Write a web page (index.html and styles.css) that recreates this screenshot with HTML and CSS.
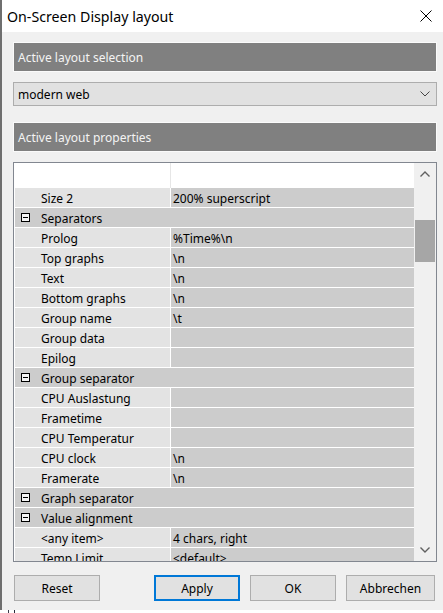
FILE: index.html
```html
<!DOCTYPE html>
<html>
<head>
<meta charset="utf-8">
<link rel="stylesheet" href="styles.css">
</head>
<body>
<div class="window">
  <div class="titlebar">
    <span class="title">On-Screen Display layout</span>
    <svg class="close" width="12" height="12" viewBox="0 0 12 12"><path d="M0.5 0.5L11.5 11.5M11.5 0.5L0.5 11.5" stroke="#000" stroke-width="1" fill="none"/></svg>
  </div>
  <div class="content">
    <div class="section-header">Active layout selection</div>
    <div class="combo">
      <span>modern web</span>
      <svg class="combo-arrow" width="10" height="6" viewBox="0 0 10 6"><path d="M0.5 0.5L5 5L9.5 0.5" stroke="#444" stroke-width="1" fill="none"/></svg>
    </div>
    <div class="section-header second">Active layout properties</div>
    <div class="grid">
      <div class="rows">
        <div class="row top"><div class="name"></div><div class="val"></div></div>
        <div class="row"><div class="name">Size 2</div><div class="val">200% superscript</div></div>
        <div class="row cat"><span class="box"></span>Separators</div>
        <div class="row"><div class="name">Prolog</div><div class="val">%Time%\n</div></div>
        <div class="row"><div class="name">Top graphs</div><div class="val">\n</div></div>
        <div class="row"><div class="name">Text</div><div class="val">\n</div></div>
        <div class="row"><div class="name">Bottom graphs</div><div class="val">\n</div></div>
        <div class="row"><div class="name">Group name</div><div class="val">\t</div></div>
        <div class="row"><div class="name">Group data</div><div class="val"></div></div>
        <div class="row"><div class="name">Epilog</div><div class="val"></div></div>
        <div class="row cat"><span class="box"></span>Group separator</div>
        <div class="row"><div class="name">CPU Auslastung</div><div class="val"></div></div>
        <div class="row"><div class="name">Frametime</div><div class="val"></div></div>
        <div class="row"><div class="name">CPU Temperatur</div><div class="val"></div></div>
        <div class="row"><div class="name">CPU clock</div><div class="val">\n</div></div>
        <div class="row"><div class="name">Framerate</div><div class="val">\n</div></div>
        <div class="row cat"><span class="box"></span>Graph separator</div>
        <div class="row cat"><span class="box"></span>Value alignment</div>
        <div class="row"><div class="name">&lt;any item&gt;</div><div class="val">4 chars, right</div></div>
        <div class="row"><div class="name">Temp Limit</div><div class="val">&lt;default&gt;</div></div>
      </div>
      <div class="scrollbar">
        <div class="sb-btn"><svg width="10" height="6" viewBox="0 0 10 6"><path d="M0.5 5.5L5 1L9.5 5.5" stroke="#606060" stroke-width="1.4" fill="none"/></svg></div>
        <div class="sb-track"><div class="sb-thumb"></div></div>
        <div class="sb-btn"><svg width="10" height="6" viewBox="0 0 10 6"><path d="M0.5 0.5L5 5L9.5 0.5" stroke="#606060" stroke-width="1.4" fill="none"/></svg></div>
      </div>
    </div>
    <div class="buttons">
      <button class="btn">Reset</button>
      <div class="spacer"></div>
      <button class="btn default">Apply</button>
      <button class="btn">OK</button>
      <button class="btn wide">Abbrechen</button>
    </div>
  </div>
</div>
<div class="behind"></div>
</body>
</html>
```

FILE: styles.css
```css
html, body {
  margin: 0;
  padding: 0;
}
body {
  width: 443px;
  height: 613px;
  overflow: hidden;
  background: #ffffff;
  font-family: "Noto Sans", "Segoe UI", sans-serif;
  font-size: 12px;
  color: #000;
}
.window {
  width: 441px;
  height: 610px;
  border-left: 2px solid #6f6f6f;
  background: #f0f0f0;
  display: flex;
  flex-direction: column;
}
.titlebar {
  height: 32px;
  background: #ffffff;
  display: flex;
  align-items: center;
  padding-left: 5px;
  padding-right: 11px;
  flex: none;
}
.title {
  font-size: 14.2px;
  flex: 1;
  line-height: 32px;
  padding-top: 2px;
}
.close {
  display: block;
  margin-top: -1px;
}
.content {
  padding: 10px 6px 0 11px;
  display: flex;
  flex-direction: column;
}
.section-header {
  height: 28px;
  background: #808080;
  border: 1px solid #fafafa;
  color: #f4f4f4;
  line-height: 30px;
  padding-left: 4px;
  font-size: 12px;
  overflow: hidden;
}
.section-header.second {
  margin-top: 16px;
}
.combo {
  margin-top: 10px;
  height: 22px;
  background: #e1e1e1;
  border: 1px solid #adadad;
  display: flex;
  align-items: center;
  padding-left: 4px;
  padding-right: 6px;
}
.combo span {
  flex: 1;
  line-height: 22px;
  padding-top: 1px;
}
.combo-arrow {
  display: block;
}
.grid {
  margin-top: 10px;
  height: 398px;
  border: 1px solid #828790;
  display: flex;
  background: #ffffff;
}
.rows {
  width: 399px;
  padding-left: 1px;
  overflow: hidden;
  background: #ffffff;
}
.row {
  height: 19px;
  border-bottom: 1px solid #ffffff;
  display: flex;
  line-height: 21px;
  white-space: nowrap;
}
.row.top {
  height: 25px;
  border-bottom: none;
}
.row.top .name {
  background: #ffffff;
  border-right: 1px solid #e6e6e6;
}
.row.top .val {
  background: #ffffff;
  border-left: none;
}
.name {
  width: 129px;
  padding-left: 26px;
  background: #e3e3e3;
  flex: none;
}
.val {
  flex: 1;
  background: #cccccc;
  border-left: 1px solid #ffffff;
  padding-left: 2px;
  overflow: hidden;
}
.row.cat {
  background: #cccccc;
  align-items: flex-start;
  padding-left: 6px;
}
.box {
  width: 7px;
  height: 7px;
  border: 1px solid #000;
  background: #f4f4f4;
  margin-top: 5px;
  margin-right: 11px;
  flex: none;
  display: flex;
  align-items: center;
  justify-content: center;
}
.box::after {
  content: "";
  width: 5px;
  height: 1px;
  background: #000;
}
.scrollbar {
  width: 22px;
  background: #f0f0f0;
  display: flex;
  flex-direction: column;
}
.sb-btn {
  height: 22px;
  display: flex;
  align-items: center;
  justify-content: center;
  flex: none;
}
.sb-btn svg {
  display: block;
}
.sb-track {
  flex: 1;
  padding: 35px 1px 0 1px;
}
.sb-thumb {
  height: 42px;
  background: #a6a6a6;
}
.buttons {
  margin-top: 13px;
  display: flex;
  gap: 10px;
  padding-left: 1px;
  padding-right: 2px;
}
.spacer {
  flex: 1;
}
.btn {
  width: 86px;
  height: 26px;
  background: #e1e1e1;
  border: 1px solid #adadad;
  font-family: "Noto Sans", "Segoe UI", sans-serif;
  font-size: 12px;
  color: #000;
  padding: 0;
  margin: 0;
}
.btn.wide {
  width: 89px;
}
.btn.default {
  border: 2px solid #0078d7;
}
.behind {
  height: 3px;
  background-color: #ffffff;
  background-image: linear-gradient(90deg, transparent 8px, #3a3a4a 8px, #3a3a4a 9px, transparent 9px, transparent 14px, #2a2a3a 14px, #2a2a3a 15px, transparent 15px);
}
```
